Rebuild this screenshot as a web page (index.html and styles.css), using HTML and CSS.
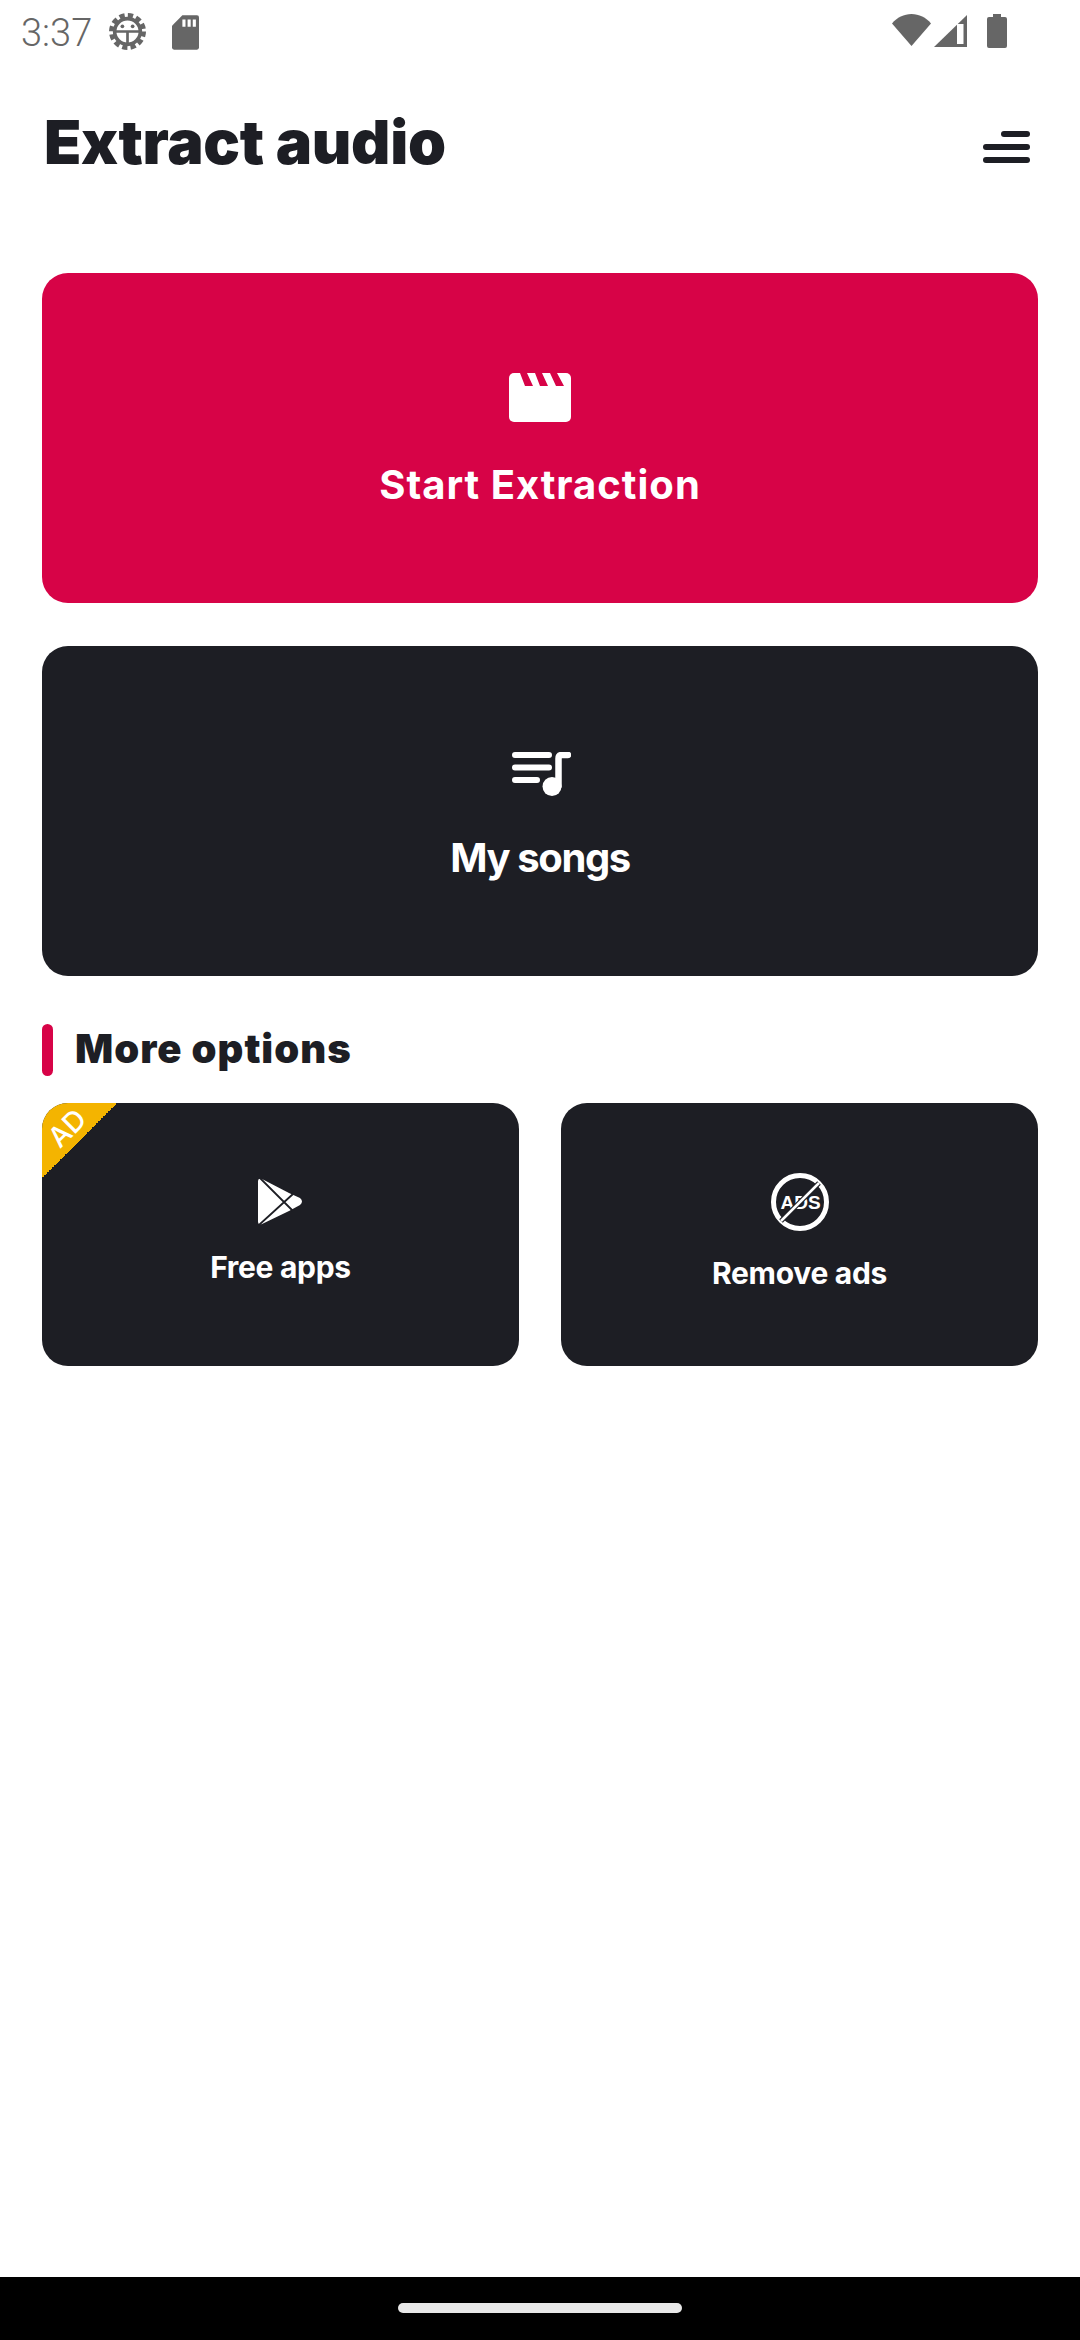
FILE: index.html
```html
<!DOCTYPE html>
<html>

<head>
	<title>Extract audio</title>
	<link rel="stylesheet" href="styles.css">
</head>

<body>

	<div class="status-bar">
		<div class="status-left">
			<span class="time">3:37</span>
			<svg class="gear" viewBox="0 0 36 36">
				<circle cx="18" cy="18" r="15.5" fill="none" stroke="#666" stroke-width="5" stroke-dasharray="5 3.1"/>
				<circle cx="18" cy="18" r="12.5" fill="none" stroke="#666" stroke-width="3.5"/>
				<path d="M5 18h26M18 18v12" stroke="#666" stroke-width="2.6"/>
				<circle cx="13" cy="13" r="1.8" fill="#666"/>
				<circle cx="23" cy="13" r="1.8" fill="#666"/>
			</svg>
			<svg class="sd" viewBox="0 0 26 33">
				<path fill="#666" d="M10 0h14a2 2 0 0 1 2 2v29a2 2 0 0 1-2 2H2a2 2 0 0 1-2-2V10z"/>
				<path fill="#fff" d="M10 4h3v7h-3zM15 4h3v7h-3zM20 4h3v7h-3z"/>
			</svg>
		</div>
		<div class="status-right">
			<svg class="wifi" viewBox="0 0 39 32"><path fill="#666" d="M0 9.500C5 3.500 12 0 19.500 0S34 3.500 39 9.500L19.500 32z"/></svg>
			<svg class="signal" viewBox="0 0 33 32">
				<path fill="#666" d="M33 0v32H0z"/>
				<path fill="#fff" d="M23 9h6.500v20H23z"/>
			</svg>
			<svg class="battery" viewBox="0 0 20 34"><path fill="#666" d="M6 0h8v3h4a2 2 0 0 1 2 2v27a2 2 0 0 1-2 2H2a2 2 0 0 1-2-2V5a2 2 0 0 1 2-2h4z"/></svg>
		</div>
	</div>

	<header class="top">
		<h1>Extract audio</h1>
		<div class="menu">
			<span class="menu-short"></span>
			<span></span>
			<span></span>
		</div>
	</header>

	<main>
		<div class="card card-red">
			<svg class="clapper" viewBox="0 0 62 49">
				<rect width="62" height="49" rx="5" fill="#fff"/>
				<path fill="#d70347" d="M11 0h7l6 13h-8zM26 0h7l6 13h-8zM41 0h7l7 13h-8z"/>
			</svg>
			<span class="card-title title-wide">Start Extraction</span>
		</div>

		<div class="card card-dark">
			<svg class="songs" viewBox="0 0 59 44">
				<path d="M3 3h34M3 15.500h34M3 28h22" stroke="#fff" stroke-width="6" stroke-linecap="round"/>
				<path d="M46.500 34V6.500q0-3.500 3.500-3.500h6" fill="none" stroke="#fff" stroke-width="6.500" stroke-linecap="round"/>
				<circle cx="40" cy="34.500" r="9.500" fill="#fff"/>
			</svg>
			<span class="card-title">My songs</span>
		</div>

		<div class="section">
			<span class="section-bar"></span>
			<h2>More options</h2>
		</div>

		<div class="options">
			<div class="option option-apps">
				<div class="corner"></div>
				<span class="corner-text">AD</span>
				<svg class="play" viewBox="0 0 45 47">
					<path fill="#fff" d="M0 3Q0 0 4 1L31 15l11 5q4 3.500 0 7L31 33 4 46q-4 1-4-2z"/>
					<path d="M2 0l33 33M1 47l34-31" stroke="#1d1e24" stroke-width="1.800" fill="none"/>
				</svg>
				<span class="option-title">Free apps</span>
			</div>
			<div class="option option-ads">
				<svg class="no-ads" viewBox="0 0 58 58">
					<circle cx="29" cy="29" r="26.500" fill="none" stroke="#fff" stroke-width="5"/>
					<text x="29.500" y="36" text-anchor="middle" class="no-ads-text">ADS</text>
					<path d="M10 48L48 10" stroke="#1d1e24" stroke-width="5"/>
					<path d="M10 48L48 10" stroke="#fff" stroke-width="2.500"/>
				</svg>
				<span class="option-title">Remove ads</span>
			</div>
		</div>
	</main>

	<div class="nav-bar">
		<span class="home-pill"></span>
	</div>

</body>

</html>
```

FILE: styles.css
```css
body {
	margin: 0px;
	height: 2340px;
	background: #fff;
	display: flex;
	flex-direction: column;
	font-family: Inter, Lato, sans-serif;
	color: #1d1e24;
}

svg {
	display: block;
	flex-shrink: 0;
}

.status-bar {
	height: 62px;
	display: flex;
	justify-content: space-between;
	align-items: flex-start;
	padding: 13px 73px 0 21px;
}

.status-left,
.status-right {
	display: flex;
	align-items: flex-start;
}

.time {
	font-family: Roboto, sans-serif;
	font-weight: 300;
	font-size: 38px;
	line-height: 40px;
	color: #666;
	margin-right: 17px;
}

.gear {
	width: 37px;
	height: 37px;
	margin-right: 26px;
}

.sd {
	width: 27px;
	height: 35px;
	margin-top: 2px;
}

.wifi {
	width: 39px;
	height: 32px;
	margin-top: 1px;
}

.signal {
	width: 33px;
	height: 32px;
	margin: 2px 20px 0 3px;
}

.battery {
	width: 20px;
	height: 34px;
	margin-top: 1px;
}

.top {
	height: 198px;
	padding: 0 50px 0 44px;
	display: flex;
	justify-content: space-between;
	align-items: flex-start;
}

h1 {
	margin: 32px 0 0;
	font-size: 61px;
	line-height: 70px;
	font-weight: 900;
	letter-spacing: -0.3px;
}

.menu {
	width: 47px;
	margin-top: 56px;
	display: flex;
	flex-direction: column;
	align-items: flex-end;
	gap: 7px;
}

.menu span {
	display: block;
	width: 47px;
	height: 6px;
	border-radius: 3px;
	background: #1d1e24;
}

.menu .menu-short {
	width: 29px;
}

main {
	flex: 1;
	padding: 0 42px;
}

.card {
	height: 330px;
	box-sizing: border-box;
	border-radius: 26px;
	margin-bottom: 43px;
	padding-top: 100px;
	display: flex;
	flex-direction: column;
	align-items: center;
	color: #fff;
}

.card-red {
	background: #d70347;
}

.card-dark {
	background: #1d1e24;
	padding-top: 106px;
}

.card-title {
	font-size: 40px;
	line-height: 50px;
	font-weight: 700;
	letter-spacing: -1.4px;
}

.title-wide {
	letter-spacing: 1px;
}

.clapper {
	width: 62px;
	height: 49px;
	margin-bottom: 38px;
}

.songs {
	width: 59px;
	height: 44px;
	margin: 0 0 37px 2px;
}

.section {
	display: flex;
	align-items: center;
	gap: 22px;
	height: 52px;
	margin-top: 48px;
}

.section-bar {
	width: 11px;
	height: 52px;
	border-radius: 6px;
	background: #d70347;
}

h2 {
	margin: 0 0 2px;
	font-size: 40px;
	line-height: 50px;
	font-weight: 900;
	letter-spacing: 1px;
}

.options {
	display: grid;
	grid-template-columns: 477px 477px;
	gap: 42px;
	margin-top: 27px;
}

.option {
	position: relative;
	height: 263px;
	box-sizing: border-box;
	border-radius: 26px;
	background: #1d1e24;
	color: #fff;
	display: flex;
	flex-direction: column;
	align-items: center;
}

.option-apps {
	padding-top: 75px;
}

.option-ads {
	padding-top: 70px;
}

.option-title {
	font-size: 30px;
	line-height: 36px;
	font-weight: 700;
	letter-spacing: -0.3px;
}

.play {
	width: 45px;
	height: 47px;
	margin-bottom: 24px;
}

.no-ads {
	width: 58px;
	height: 58px;
	margin-bottom: 24px;
}

.no-ads-text {
	font-family: "Liberation Sans", sans-serif;
	font-weight: 700;
	font-size: 19px;
	fill: #fff;
}

.corner {
	position: absolute;
	top: 0;
	left: 0;
	width: 75px;
	height: 75px;
	border-top-left-radius: 26px;
	background: linear-gradient(135deg, #f4b400 50%, transparent 50%);
}

.corner-text {
	position: absolute;
	top: 10px;
	left: 5px;
	font-size: 28px;
	line-height: 30px;
	font-weight: 500;
	transform: rotate(-45deg);
}

.nav-bar {
	height: 63px;
	background: #000;
	display: flex;
	justify-content: center;
	padding-top: 26px;
	box-sizing: border-box;
}

.home-pill {
	width: 284px;
	height: 10px;
	border-radius: 5px;
	background: #e8e8e8;
}
```
